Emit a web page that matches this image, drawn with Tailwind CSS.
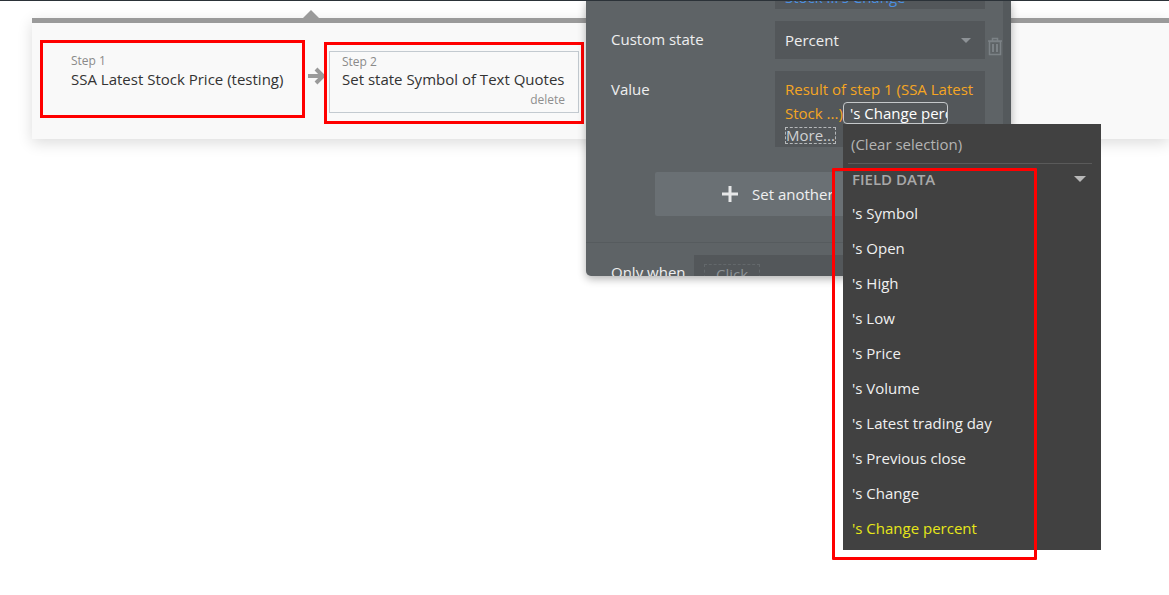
<!DOCTYPE html>
<html lang="en">
<head>
    <meta charset="UTF-8">
    <meta name="viewport" content="width=device-width, initial-scale=1.0">
    <title>Workflow editor</title>
    <script src="https://cdn.jsdelivr.net/npm/@tailwindcss/browser@4"></script>
</head>
<body class="relative w-[1169px] h-[595px] overflow-hidden bg-white font-['Open_Sans',sans-serif] text-[15px]">
    <!-- Top edge -->
    <div class="relative z-10 h-px bg-[#2b3238]"></div>

    <!-- Workflow strip -->
    <div class="relative mt-[17px] ml-[32px] h-[121px] border-t-[5px] border-[#9a9a9a] bg-[#f9f9f9] shadow-[0_4px_14px_rgba(0,0,0,0.14)]">
        <div class="absolute left-[270px] top-[-13px] w-0 h-0 border-x-[9px] border-x-transparent border-b-[9px] border-b-[#9a9a9a]"></div>
        <div class="flex items-start pl-[8px] pt-[17px]">
            <!-- Step 1 -->
            <div class="w-[265px] h-[78px] border-[3px] border-[#ff0000] pl-[28px] pt-[10px] text-[#333]">
                <div class="text-[12px] leading-[16px] text-[#8a8a8a]">Step 1</div>
                <div class="leading-[20px] whitespace-nowrap">SSA Latest Stock Price (testing)</div>
            </div>
            <svg class="mt-[26px] ml-[2px] mr-[-2px] shrink-0" width="19" height="20" viewBox="0 0 19 20"><path d="M1 10h15M9 3l7 7-7 7" fill="none" stroke="#9a9a9a" stroke-width="4"/></svg>
            <!-- Step 2 -->
            <div class="relative mt-[2px] w-[260px] h-[82px] border-[3px] border-[#ff0000] p-[2px] pt-[6px] shrink-0">
                <div class="h-[62px] border border-[#c3cad0] pl-[12px] pt-[2px] relative text-[#333]">
                    <div class="text-[12px] leading-[16px] text-[#8a8a8a]">Step 2</div>
                    <div class="leading-[18px] whitespace-nowrap">Set state Symbol of Text Quotes</div>
                    <div class="absolute right-[13px] bottom-[5px] text-[12px] leading-[14px] text-[#8f8f8f]">delete</div>
                </div>
            </div>
        </div>
    </div>

    <!-- Property panel -->
    <div class="absolute left-[586px] top-0 w-[425px] h-[276px] overflow-hidden rounded-b-[5px] bg-[#5e6366] shadow-[0_3px_8px_rgba(0,0,0,0.3)] text-white/90">
        <div class="absolute right-0 top-0 w-[8px] h-full bg-[#54595c]"></div>
        <div class="absolute left-[189px] top-[-14px] w-[210px] h-[23px] bg-[#53575a] pl-[10px] text-[#4a90e2] leading-[23px] whitespace-nowrap">Stock ...'s Change</div>

        <div class="absolute left-[25px] top-[29px] leading-[20px]">Custom state</div>
        <div class="absolute left-[189px] top-[21px] w-[210px] h-[38px] bg-[#53575a] pl-[10px] leading-[38px] flex justify-between items-center pr-[14px]">
            <span>Percent</span>
            <span class="w-0 h-0 border-x-[5px] border-x-transparent border-t-[5px] border-t-[#8d9296]"></span>
        </div>
        <svg class="absolute left-[401px] top-[37px]" width="16" height="19" viewBox="0 0 16 19" fill="none" stroke="#7c8286" stroke-width="1.5"><path d="M1 4h14M5.500 4V1.500h5V4M2.500 4.500h11v13h-11z"/><path d="M6 7v8M10 7v8" stroke-width="2"/></svg>

        <div class="absolute left-[25px] top-[79px] leading-[20px]">Value</div>
        <div class="absolute left-[189px] top-[71px] w-[210px] h-[76px] bg-[#53575a] pl-[10px] pt-[6px]">
            <div class="leading-[24px] text-[#f5a623] whitespace-nowrap">Result of step 1 (SSA Latest</div>
            <div class="leading-[24px] text-[#f5a623] whitespace-nowrap">Stock ...)</div>
            <div class="mt-[2px] w-[51px] h-[17px] border border-dashed border-[#b5b8ba] leading-[15px] text-[#d0d2d4]">More...</div>
        </div>
        <div class="absolute left-[257px] top-[102px] w-[105px] h-[22px] overflow-hidden whitespace-nowrap rounded-[4px] border border-[#c5c8ca] pl-[6px] leading-[20px] text-white">'s Change percent</div>

        <div class="absolute left-[69px] top-[172px] w-[320px] h-[44px] rounded-[2px] bg-[#6a7074] flex items-center pl-[66px] gap-[13px]">
            <svg width="18" height="18" viewBox="0 0 18 18"><path d="M9 1v16M1 9h16" stroke="#e6e7e8" stroke-width="3"/></svg>
            <span class="whitespace-nowrap">Set another</span>
        </div>

        <div class="absolute left-0 top-[242px] w-full h-px bg-[#565b5e]"></div>
        <div class="absolute left-[25px] top-[262px] leading-[20px] whitespace-nowrap">Only when</div>
        <div class="absolute left-[108px] top-[255px] w-[200px] h-[30px] bg-[#53575a] pl-[10px] pt-[8px]">
            <span class="inline-block border border-dashed border-[#63686b] px-[11px] leading-[18px] text-[#8d9296]">Click</span>
        </div>
    </div>

    <!-- Dropdown menu -->
    <div class="absolute left-[843px] top-[124px] w-[258px] h-[426px] bg-[#414141] text-[#f0f0f0]">
        <div class="mx-[5px] w-[244px] h-[40px] border-b border-[#5a5a5a] pl-[3px] pt-[10px] leading-[20px] text-[#b4b4b4]">(Clear selection)</div>
        <div class="flex items-center justify-between h-[30px] pl-[9px] pr-[15px] font-semibold text-[#a8a8a8]">
            <span>FIELD DATA</span>
            <span class="w-0 h-0 border-x-[6px] border-x-transparent border-t-[6px] border-t-[#b8b8b8]"></span>
        </div>
        <ul class="pl-[9px] mt-[2px]">
            <li class="h-[35px] leading-[35px]">'s Symbol</li>
            <li class="h-[35px] leading-[35px]">'s Open</li>
            <li class="h-[35px] leading-[35px]">'s High</li>
            <li class="h-[35px] leading-[35px]">'s Low</li>
            <li class="h-[35px] leading-[35px]">'s Price</li>
            <li class="h-[35px] leading-[35px]">'s Volume</li>
            <li class="h-[35px] leading-[35px]">'s Latest trading day</li>
            <li class="h-[35px] leading-[35px]">'s Previous close</li>
            <li class="h-[35px] leading-[35px]">'s Change</li>
            <li class="h-[35px] leading-[35px] text-[#e6e619]">'s Change percent</li>
        </ul>
    </div>

    <!-- Red annotation over the dropdown -->
    <div class="absolute left-[832px] top-[168px] w-[205px] h-[392px] rounded-[1px] border-[3px] border-[#ff0000]"></div>
</body>
</html>
